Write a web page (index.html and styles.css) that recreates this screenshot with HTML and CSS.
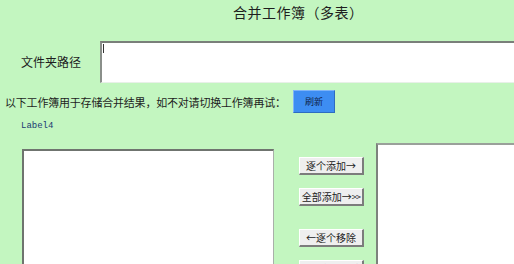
FILE: index.html
```html
<!DOCTYPE html>
<html lang="zh">
<head>
<meta charset="utf-8">
<title>合并工作簿（多表）</title>
<link rel="stylesheet" href="styles.css">
</head>
<body>
<div class="form">
  <div class="title">合并工作簿（多表）</div>
  <div class="path-row">
    <span class="path-label">文件夹路径</span>
    <div class="path-input"><span class="caret"></span></div>
  </div>
  <div class="refresh-row">
    <span class="hint">以下工作簿用于存储合并结果，如不对请切换工作簿再试：</span>
    <span class="refresh-btn">刷新</span>
  </div>
  <div class="label4">Label4</div>
  <div class="lists-row">
    <div class="list list-left"></div>
    <div class="btn-col">
      <span class="btn">逐个添加→</span>
      <span class="btn">全部添加→<span class="chev">&gt;&gt;</span></span>
      <span class="btn btn-gap">←逐个移除</span>
      <span class="btn"><span class="chev">&lt;&lt;</span>←全部移除</span>
    </div>
    <div class="list list-right"></div>
  </div>
</div>
</body>
</html>
```
FILE: styles.css
```css
html, body {
  margin: 0;
  padding: 0;
  background: #c3f6c0;
  overflow: hidden;
}
.form {
  width: 514px;
  height: 264px;
  overflow: hidden;
  font-family: "Noto Sans CJK SC", "DejaVu Sans", sans-serif;
  color: #1e1e1e;
}
.title {
  height: 30px;
  padding-left: 233px;
  padding-top: 2px;
  box-sizing: border-box;
  font-size: 14px;
  line-height: 20px;
  letter-spacing: 0.5px;
  white-space: nowrap;
}
.path-row {
  display: flex;
  align-items: center;
  margin-top: 11px;
  height: 42px;
}
.path-label {
  flex: 0 0 auto;
  width: 79px;
  padding-left: 21px;
  font-size: 12px;
  line-height: 16px;
  white-space: nowrap;
}
.path-input {
  flex: 0 0 auto;
  width: 440px;
  height: 42px;
  box-sizing: border-box;
  background: #fff;
  border-top: 2px solid #7a7f7a;
  border-left: 2px solid #8a8f8a;
  border-bottom: 1px solid #e8f0e8;
  padding: 1px 1px;
}
.caret {
  display: block;
  width: 1px;
  height: 9px;
  background: #333;
}
.refresh-row {
  display: flex;
  align-items: center;
  margin-top: 7px;
  height: 23px;
}
.hint {
  flex: 0 0 auto;
  width: 293px;
  box-sizing: border-box;
  padding-left: 5px;
  font-size: 11px;
  line-height: 14px;
  letter-spacing: -0.2px;
  white-space: nowrap;
  overflow: hidden;
}
.refresh-btn {
  flex: 0 0 auto;
  width: 42px;
  height: 23px;
  box-sizing: border-box;
  display: flex;
  align-items: center;
  justify-content: center;
  background: #3d8df2;
  border-top: 1px solid #7fb4f7;
  border-left: 1px solid #7fb4f7;
  border-right: 1px solid #2d6cc0;
  border-bottom: 1px solid #2d6cc0;
  font-size: 9px;
  color: #0e2248;
}
.label4 {
  margin-top: 8px;
  height: 10px;
  padding-left: 21px;
  font-family: "Liberation Mono", monospace;
  font-size: 9px;
  line-height: 10px;
  color: #1b3a72;
}
.lists-row {
  display: flex;
  align-items: flex-start;
}
.list {
  flex: 0 0 auto;
  height: 200px;
  box-sizing: border-box;
  background: #fff;
  border-top: 2px solid #6f746f;
  border-left: 2px solid #6f746f;
}
.list-left {
  margin-left: 22px;
  margin-top: 18px;
  width: 252px;
  border-right: 1px solid #a9b0a9;
}
.list-right {
  margin-left: 12px;
  margin-top: 12px;
  width: 160px;
  border-top-color: #9aa09a;
  border-left-color: #7d827d;
}
.btn-col {
  flex: 0 0 auto;
  margin-left: 25px;
  margin-top: 26px;
  width: 65px;
  display: flex;
  flex-direction: column;
  gap: 13px;
}
.btn {
  height: 18px;
  box-sizing: border-box;
  display: flex;
  align-items: center;
  justify-content: center;
  background: #efefef;
  border-top: 1px solid #ffffff;
  border-left: 1px solid #ffffff;
  border-right: 2px solid #7c7c7c;
  border-bottom: 2px solid #7c7c7c;
  font-size: 10px;
  line-height: 12px;
  white-space: nowrap;
  color: #222;
}
.chev {
  font-size: 9px;
  letter-spacing: -0.8px;
}
.btn-gap {
  margin-top: 10px;
}
```
